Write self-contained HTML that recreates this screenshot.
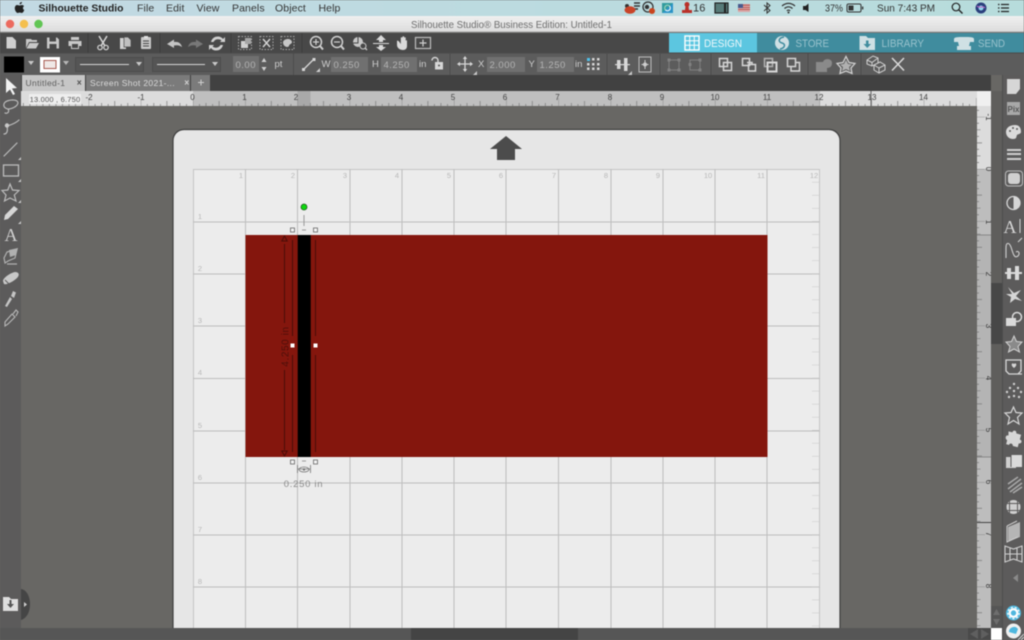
<!DOCTYPE html>
<html><head><meta charset="utf-8"><title>Silhouette Studio</title>
<style>
html,body{margin:0;padding:0;background:#686764;width:1024px;height:640px;overflow:hidden}
svg{display:block;filter:blur(.5px)}
text{font-family:"Liberation Sans",sans-serif}
</style></head><body>
<svg xmlns="http://www.w3.org/2000/svg" width="1024" height="640" viewBox="0 0 1024 640">
<defs>
<linearGradient id="menu" x1="0" x2="1" y1="0" y2="0"><stop offset="0" stop-color="#c3d9e3"/><stop offset=".5" stop-color="#bcdbe0"/><stop offset="1" stop-color="#b7dcdc"/></linearGradient>
<linearGradient id="title" x1="0" x2="0" y1="0" y2="1"><stop offset="0" stop-color="#f0f0f0"/><stop offset="1" stop-color="#dcdcdc"/></linearGradient>
<pattern id="rh" patternUnits="userSpaceOnUse" x="193" y="91" width="52.2" height="15">
<path d="M0 7V15M26.1 10V15M13 12V15M39.1 12V15M6.5 13V15M19.6 13V15M32.6 13V15M45.7 13V15" stroke="#777" stroke-width=".7" fill="none"/></pattern>
<pattern id="rv" patternUnits="userSpaceOnUse" x="977" y="169" width="14" height="52.2">
<path d="M0 0H8M0 26.1H5M0 13H3.5M0 39.1H3.5M0 6.5H2M0 19.6H2M0 32.6H2M0 45.7H2" stroke="#777" stroke-width=".7" fill="none"/></pattern>
<pattern id="mt" patternUnits="userSpaceOnUse" x="808" y="169" width="12" height="13.05">
<path d="M4 0H12" stroke="#c6c6c6" stroke-width="1"/></pattern>
</defs>

<!-- canvas -->
<rect width="1024" height="640" fill="#686764"/>

<!-- mat -->
<rect x="173" y="129.500" width="667" height="530" rx="11" fill="#e6e6e6" stroke="#3f3f3f" stroke-width="1.200"/>
<polygon points="506,136 522,149 515,149 515,160 497,160 497,149 490,149" fill="#4c4c4c"/>
<rect x="193.500" y="169.500" width="626" height="480" fill="#ececec" stroke="#c4c4c4"/>
<path d="M245.500 169V640M297.500 169V640M350 169V640M402 169V640M454 169V640M506 169V640M558.500 169V640M611 169V640M663 169V640M715 169V640M767 169V640M193 222H820M193 274H820M193 326H820M193 378.500H820M193 431H820M193 483H820M193 535H820M193 587H820" stroke="#bdbdbd" stroke-width="1" fill="none"/>
<rect x="808" y="169" width="12" height="460" fill="url(#mt)"/>
<g font-size="7.500" fill="#b8b8b8" text-anchor="middle">
<text x="241" y="178">1</text><text x="293" y="178">2</text><text x="345" y="178">3</text><text x="397" y="178">4</text><text x="449" y="178">5</text><text x="501" y="178">6</text><text x="554" y="178">7</text><text x="606" y="178">8</text><text x="658" y="178">9</text><text x="708" y="178">10</text><text x="761" y="178">11</text><text x="814" y="178">12</text>
<text x="200" y="219">1</text><text x="200" y="271">2</text><text x="200" y="323">3</text><text x="200" y="375">4</text><text x="200" y="428">5</text><text x="200" y="480">6</text><text x="200" y="532">7</text><text x="200" y="584">8</text>
</g>

<!-- shapes -->
<rect x="245.500" y="235" width="522" height="222" fill="#84160d"/>
<rect x="297.700" y="235" width="13" height="222" fill="#000"/>
<g stroke="#4a0d08" fill="none" stroke-width="1">
<path d="M292.500 240V336M292.500 355V452M315.500 240V336M315.500 355V452"/>
<path d="M284.500 244V323M284.500 370V450"/>
<path d="M284.500 236L281.800 241H287.200ZM284.500 456L281.800 451H287.200Z"/>
</g>
<text transform="translate(288.500,346.500) rotate(-90)" font-size="10" fill="#4e100a" text-anchor="middle" letter-spacing=".6">4.250 in</text>
<g stroke="#666" stroke-width=".8" fill="#f4f4f4">
<rect x="290.500" y="228" width="4" height="4"/><rect x="313.500" y="228" width="4" height="4"/>
<rect x="290.500" y="460" width="4" height="4"/><rect x="313.500" y="460" width="4" height="4"/>
</g>
<rect x="290.500" y="343.500" width="4" height="4" fill="#fff"/><rect x="313.500" y="343.500" width="4" height="4" fill="#fff"/>
<circle cx="304" cy="207" r="3" fill="#0dd60d" stroke="#245a24" stroke-width=".8"/>
<path d="M304 215V226M302 230H306M302 461H306" stroke="#999" stroke-width="1" fill="none"/>
<path d="M297.500 465V473M310.500 465V473M298 469H310" stroke="#777" stroke-width=".8" fill="none"/>
<ellipse cx="304" cy="469.500" rx="5" ry="2.500" fill="none" stroke="#777" stroke-width=".8"/><circle cx="304" cy="469.500" r="1.200" fill="#777"/>
<text x="303.500" y="487" font-size="9.500" fill="#8a8a8a" text-anchor="middle" letter-spacing=".7">0.250 in</text>

<!-- horizontal ruler -->
<rect x="21" y="75" width="970" height="16" fill="#414141"/>
<rect x="21" y="91" width="956" height="15" fill="#dcdcdc"/>
<rect x="193" y="91" width="627" height="15" fill="#bfbfbf"/>
<rect x="297.500" y="91" width="13" height="15" fill="#a9a9a9"/>
<rect x="21" y="91" width="956" height="15" fill="url(#rh)"/>
<path d="M871 91V106" stroke="#666"/>
<rect x="977" y="91" width="14" height="15" fill="#f0f0f0"/>
<g font-size="8" fill="#444" text-anchor="middle">
<text x="89" y="100">-2</text><text x="141" y="100">-1</text><text x="192.500" y="100">0</text><text x="244.500" y="100">1</text><text x="296" y="100">2</text><text x="349" y="100">3</text><text x="401" y="100">4</text><text x="453" y="100">5</text><text x="505" y="100">6</text><text x="557.500" y="100">7</text><text x="610" y="100">8</text><text x="662" y="100">9</text><text x="715" y="100">10</text><text x="767" y="100">11</text><text x="819" y="100">12</text><text x="872" y="100">13</text><text x="923.500" y="100">14</text>
</g>
<rect x="29" y="94" width="52" height="10" rx="1" fill="#f0f0f0" opacity=".9"/>
<text x="55" y="101.800" font-size="7.500" fill="#555" text-anchor="middle" letter-spacing=".2">13.000 , 6.750</text>

<!-- vertical ruler -->
<rect x="977" y="106" width="14" height="523" fill="#dcdcdc"/>
<rect x="977" y="169" width="14" height="66" fill="#bdbdbd"/>
<rect x="977" y="235" width="14" height="222" fill="#b4b4b4"/>
<rect x="977" y="457" width="14" height="172" fill="#bdbdbd"/>
<rect x="977" y="106" width="14" height="523" fill="url(#rv)"/>
<path d="M977 235H991M977 457H991" stroke="#888"/><path d="M977 522.500H991" stroke="#444"/>
<g font-size="8" fill="#333" text-anchor="middle">
<text transform="translate(986,117) rotate(90)">-1</text><text transform="translate(986,169) rotate(90)">0</text><text transform="translate(986,222) rotate(90)">1</text><text transform="translate(986,274) rotate(90)">2</text><text transform="translate(986,326) rotate(90)">3</text><text transform="translate(986,378) rotate(90)">4</text><text transform="translate(986,430) rotate(90)">5</text><text transform="translate(986,482) rotate(90)">6</text><text transform="translate(986,534) rotate(90)">7</text><text transform="translate(986,586) rotate(90)">8</text>
</g>

<!-- vertical scrollbar -->
<rect x="991" y="91" width="11" height="537" fill="#5f5e5c"/>
<rect x="991" y="283" width="11" height="61" fill="#474747"/>
<rect x="991" y="606" width="11" height="22" fill="#555"/>
<path d="M996.500 609L993 615H1000ZM996.500 625L993 619H1000Z" fill="#6e6e6e"/>
<rect x="991" y="628" width="11" height="12" fill="#fff"/>

<!-- bottom scrollbar -->
<rect x="0" y="628" width="991" height="12" fill="#565656"/>
<rect x="411" y="628" width="167" height="12" fill="#444"/>
<rect x="968" y="628" width="23" height="12" fill="#4a4a4a"/>
<path d="M970 634L978 629V639ZM989 634L981 629V639Z" fill="#5f5f5f"/>

<!-- left toolbar -->
<rect x="0" y="75" width="21" height="553" fill="#5c5b5b"/>
<path d="M6 78L17 88L12 88.500L15 94L13 95L10 89.500L6 93Z" fill="#f2f2f2"/>
<g fill="none" stroke="#bcbcbc" stroke-width="1.200" stroke-linecap="round">
<path d="M4 104C5 100 14 99 17 101C20 104 15 108 9 109C6 109 3 107 4 104ZM8 109C10 112 7 114 5 113" stroke-dasharray="1.500 .8"/>
<path d="M4 134C7 134 8 131 7 126C10 125 15 124 19 120"/>
<path d="M4 156L17 143"/>
<rect x="3.500" y="165" width="15" height="11" stroke-width="1.300"/>
<path d="M10 184L12.500 190L19 190.500L14.300 195L16 201L10 198L4.500 201L6 195L2 190.500L7.800 190Z" stroke-width="1.200"/>
</g>
<circle cx="7" cy="125.500" r="2.200" fill="#c8c8c8"/>
<path d="M4 220L5 215L14 206L18 209L8 219Z" fill="#d6d6d6"/>
<text x="11" y="241" font-size="18" fill="#d0d0d0" text-anchor="middle" style="font-family:'Liberation Serif',serif">A</text>
<path d="M5 263L4 258L7 252L17 249L15 258L8 261ZM7 264H17" fill="none" stroke="#b0b0b0" stroke-width="1.200"/>
<path d="M9 250L18 248L16 255L10 257Z" fill="#b0b0b0"/>
<path d="M3 281C3 278 10 273 15 272C19 272 20 275 17 278C13 282 6 285 4 284Z" fill="#c8c8c8"/>
<path d="M5 280L9 284" stroke="#5c5b5b"/>
<path d="M5 306L10 297L12 299L7 307ZM11 296L13 291L16 292.500L14 298Z" fill="#c4c4c4"/>
<path d="M5 326L5 322L12 314L15 317L8 324ZM13 314L16 310L18 312L16 316" fill="none" stroke="#b8b8b8" stroke-width="1.100"/>
<g fill="#c6c6c6"><path d="M21 157V160H18ZM21 179V182H18ZM21 200V203H18ZM21 221V224H18Z"/></g>

<!-- folder + drawer -->
<path d="M21 589C27 590 30 597 30 604C30 612 27 618 21 620Z" fill="#454545"/>
<path d="M24 602L27 604.500L24 607Z" fill="#cfcfcf"/>
<path d="M3 597H9L11 599H18V611H3Z" fill="#dedede"/>
<path d="M9.500 600H11.500V604H14L10.500 608L7 604H9.500Z" fill="#555"/>

<!-- right panel -->
<rect x="1002" y="75" width="22" height="565" fill="#5c5b5b"/>
<path d="M1002.500 75V640" stroke="#4d4d4d"/>
<path d="M1007 79H1020V89L1016 94H1007Z" fill="#d6d6d6"/>
<rect x="1007" y="102" width="13" height="13" fill="#a8a8a8"/><text x="1013.500" y="112" font-size="8" font-weight="bold" fill="#555" text-anchor="middle">Pix</text>
<path d="M1006 132C1006 127 1011 125 1015 125C1020 125 1021 129 1021 132C1021 134 1018 134 1017 135C1016 137 1017 139 1013 139C1009 139 1006 136 1006 132Z" fill="#dadada"/>
<g fill="#5c5b5b"><circle cx="1010" cy="131" r="1"/><circle cx="1013" cy="128" r="1"/><circle cx="1017" cy="129" r="1"/></g>
<path d="M1007 150H1021M1007 154H1021M1007 159H1021" stroke="#cfcfcf" stroke-width="2" fill="none"/>
<rect x="1005.500" y="171" width="17" height="15" rx="3" fill="none" stroke="#bdbdbd"/><rect x="1008" y="173" width="12" height="11" rx="3" fill="#d0d0d0"/>
<circle cx="1013.500" cy="203" r="6.500" fill="none" stroke="#d6d6d6" stroke-width="1.300"/><path d="M1013.500 196.500A6.500 6.500 0 0 1 1013.500 209.500Z" fill="#d6d6d6"/>
<text x="1010" y="233" font-size="18" fill="#d6d6d6" text-anchor="middle" style="font-family:'Liberation Serif',serif">A</text><path d="M1020 219V233" stroke="#d6d6d6"/>
<path d="M1006 258L1006 248C1006 242 1009 242 1011 247C1013 253 1014 259 1018 256C1020 254 1019 250 1016 252M1018 242L1022 238" fill="none" stroke="#cfcfcf" stroke-width="1.100"/>
<g fill="#dadada"><rect x="1007" y="268" width="4" height="11"/><rect x="1015" y="266" width="4" height="14"/><rect x="1005" y="272" width="17" height="2"/></g>
<path d="M1008 287L1014 293L1021 290L1016 296L1022 301L1015 299L1010 303L1011 297L1006 294L1012 294Z" fill="#d6d6d6"/>
<rect x="1006" y="318" width="10" height="8" fill="#dadada"/><circle cx="1017" cy="317" r="4.500" fill="none" stroke="#dadada" stroke-width="1.500"/>
<path d="M1014 336L1016.500 341.500L1022 342L1018 346.500L1019.500 352L1014 349L1008.500 352L1010 346.500L1006 342L1011.500 341.500Z" fill="#8a8a8a" stroke="#d0d0d0"/>
<path d="M1006 360H1021V371L1018 374H1009L1006 371ZM1010 374H1022" fill="none" stroke="#d6d6d6" stroke-width="1.300"/>
<path d="M1014 364C1012 362 1010 365 1014 368C1018 365 1016 362 1014 364Z" fill="#d6d6d6"/>
<g fill="#cfcfcf"><circle cx="1014" cy="384" r="1.200"/><circle cx="1010" cy="388" r="1.200"/><circle cx="1018" cy="388" r="1.200"/><circle cx="1007" cy="392" r="1.200"/><circle cx="1014" cy="391" r="1.200"/><circle cx="1021" cy="392" r="1.200"/><circle cx="1009" cy="397" r="1.200"/><circle cx="1019" cy="397" r="1.200"/><circle cx="1014" cy="396" r="1.200"/></g>
<path d="M1013.500 407L1016 412.500L1022 413L1017.500 417.500L1019 424L1013.500 420.500L1008 424L1009.500 417.500L1005 413L1011 412.500Z" fill="none" stroke="#d6d6d6" stroke-width="1.200"/>
<path d="M1007 433H1011C1011 430 1015 430 1015 433H1020V438C1023 438 1023 442 1020 442V446H1015C1014 443 1011 444 1011 446H1008V442C1005 441 1005 437 1008 437Z" transform="rotate(15 1014 438)" fill="#d6d6d6"/>
<rect x="1006" y="457" width="10" height="11" fill="#cfcfcf"/><rect x="1011" y="455" width="11" height="12" fill="#dadada"/><path d="M1011 455V467" stroke="#5c5b5b"/>
<path d="M1008 484L1018 477M1008 489L1021 479M1010 492L1022 483M1013 493L1022 487" stroke="#a8a8a8" stroke-width="1.600"/>
<circle cx="1013.500" cy="507" r="7" fill="#cfcfcf"/><path d="M1009.500 500.500V513.500M1017.500 500.500V513.500M1007 503.500H1020M1007 510.500H1020" stroke="#5c5b5b"/>
<path d="M1008 527L1020 522V537L1008 541Z" fill="#b5b5b5"/><path d="M1007 526L1017 521M1007 526V542L1018 537" fill="none" stroke="#cfcfcf"/>
<path d="M1005 546L1013.500 549L1022 546V562L1013.500 559L1005 562ZM1010 548V560M1017 548V560M1005 554H1022" fill="none" stroke="#cfcfcf" stroke-width="1.100"/>
<path d="M1013 578L1018 574V582Z" fill="#8a8a8a"/>
<circle cx="1013.500" cy="613" r="7.500" fill="#4fb7de"/><circle cx="1013.500" cy="613" r="3.800" fill="none" stroke="#fff" stroke-width="2.200"/><circle cx="1013.500" cy="613" r="5.700" fill="none" stroke="#fff" stroke-width="1.200" stroke-dasharray="2 2"/>
<circle cx="1013.500" cy="631" r="7.500" fill="#f0f0f0"/><path d="M1009 632A5 5 0 0 1 1018 629L1016 634Z" fill="#4fb7de"/>
<path d="M1018 640L1024 634M1021 640L1024 637" stroke="#cfcfcf"/>

<!-- menu bar -->
<rect width="1024" height="16" fill="url(#menu)"/>
<path d="M19.500 3.500C20 2.500 21 2 22 2C22 3.200 21 4.300 19.800 4.300ZM17 5C18 5 18.700 5.500 19.500 5.500C20.300 5.500 21 5 22 5C23 5 23.700 5.500 24 6.200C22.500 7 22.700 9.300 24.300 10C23.700 11.500 22.700 13 21.700 13C21 13 20.500 12.500 19.700 12.500C18.800 12.500 18.400 13 17.600 13C16.400 13 14.800 10.500 14.800 8.300C14.800 6.200 16 5 17 5Z" fill="#222"/>
<g font-size="10.500" fill="#333" letter-spacing=".1">
<text x="38.500" y="11.500" font-weight="bold" fill="#222" textLength="85" lengthAdjust="spacingAndGlyphs" letter-spacing="0">Silhouette Studio</text>
<text x="137" y="11.500">File</text><text x="166" y="11.500">Edit</text><text x="196.500" y="11.500">View</text><text x="232" y="11.500">Panels</text><text x="275" y="11.500">Object</text><text x="318.500" y="11.500">Help</text>
<text x="693" y="11.500" font-size="11">16</text>
<text x="825" y="11.500" font-size="10" textLength="18" lengthAdjust="spacingAndGlyphs" letter-spacing="0">37%</text>
<text x="877" y="11.500" textLength="58" lengthAdjust="spacingAndGlyphs" letter-spacing="0">Sun 7:43 PM</text>
</g>
<!-- status icons -->
<path d="M634 3L640 3M634 6H640M634 9H638" stroke="#333" stroke-width="1.500"/><circle cx="627" cy="6" r="2" fill="#333"/>
<ellipse cx="630" cy="10" rx="5.500" ry="3.800" fill="#c8452a"/>
<circle cx="648" cy="7" r="5" fill="none" stroke="#333" stroke-width="1.300"/><circle cx="647" cy="7" r="2.200" fill="#333"/><circle cx="652" cy="11" r="3" fill="#c8451f"/>
<rect x="662" y="3" width="11" height="10" fill="#2b94c8"/><circle cx="667.500" cy="8" r="2.800" fill="none" stroke="#e8f4f8" stroke-width="1.200"/><path d="M662 3H673L662 13Z" fill="#3aa36a" opacity=".45"/>
<circle cx="687" cy="4.500" r="2.500" fill="#b9322a"/><path d="M685.500 6H688.500L689 10H692V13H682V10H685Z" fill="#b9322a"/>
<rect x="715" y="3" width="13" height="10" fill="#577a78" stroke="#222" stroke-width="1.200"/><path d="M725 3.500V12.500" stroke="#222" stroke-width="2"/>
<rect x="738" y="4" width="12" height="8" fill="#d9a8a8"/><rect x="738" y="4" width="5" height="4" fill="#4a5a8c"/><path d="M743 5.200H750M743 7.500H750M738 9.500H750" stroke="#b5443c" stroke-width=".8"/>
<path d="M764 5L770 10.500L767 13V3L770 5.500L764 11" fill="none" stroke="#333" stroke-width="1"/>
<g fill="none" stroke="#333" stroke-width="1.200"><path d="M782 6C786 2.500 791 2.500 795 6M784.500 8.500C787 6.300 790 6.300 792.500 8.500M786.800 10.800C788 9.800 789 9.800 790.200 10.800"/></g><circle cx="788.500" cy="12.500" r="1" fill="#333"/>
<path d="M803 6H805.500L808.500 3.500V12L805.500 10H803Z" fill="#222"/>
<rect x="847" y="4" width="14" height="8" rx="1.500" fill="none" stroke="#333"/><rect x="848.500" y="5.500" width="5" height="5" fill="#333"/><rect x="862" y="6.500" width="1.300" height="3" fill="#333"/>
<circle cx="956" cy="7" r="3.800" fill="none" stroke="#222" stroke-width="1.200"/><path d="M959 10L962.500 13.500" stroke="#222" stroke-width="1.400"/>
<circle cx="981" cy="8" r="5.500" fill="#2a3f7c"/><circle cx="981" cy="8" r="2.500" fill="#8fd5ec"/><path d="M977 6C980 9 983 5 985 8" stroke="#c96bc8" fill="none"/>
<path d="M998 4.500H999.500M1001 4.500H1009M998 8H999.500M1001 8H1009M998 11.500H999.500M1001 11.500H1009" stroke="#222" stroke-width="1.200"/>

<!-- title bar -->
<rect y="16" width="1024" height="16" fill="url(#title)"/>
<path d="M0 32H1024" stroke="#9a9a9a"/>
<circle cx="10" cy="24" r="4.200" fill="#ec6a5e"/><circle cx="24" cy="24" r="4.200" fill="#f4bf4f"/><circle cx="38.500" cy="24" r="4.200" fill="#61c554"/>
<text x="411" y="28" font-size="10" fill="#6e6e6e" textLength="201" lengthAdjust="spacingAndGlyphs">Silhouette Studio® Business Edition: Untitled-1</text>

<!-- toolbar row 1 -->
<rect y="33" width="1024" height="20" fill="#484848"/>
<rect x="669" y="33" width="355" height="20" fill="#408c9e"/>
<rect x="669" y="33" width="88" height="20" fill="#5cc6e0"/>
<rect x="685" y="36" width="14" height="14" fill="none" stroke="#fff" stroke-width="1.400"/><path d="M689.700 36V50M694.300 36V50M685 40.700H699M685 45.300H699" stroke="#fff" stroke-width="1"/>
<circle cx="782" cy="43" r="7" fill="#cfe0e4"/><path d="M784 37C778 38 778 42 782 43C786 44 785 48 780 49" fill="none" stroke="#408c9e" stroke-width="1.500"/>
<path d="M859.500 36H866L868 38H875V50H859.500Z" fill="#cfe0e4"/><path d="M866 40.500H868.500V44H871L867.300 48L863.500 44H866Z" fill="#408c9e"/>
<path d="M954 39C954 37 958 37 964 37C970 37 974 37 974 39V42H970L969 46H971V50H957V46H959L958 42H954Z" fill="#cfe0e4"/>
<g font-size="11"><text x="704" y="47" fill="#eef8fb" textLength="38" lengthAdjust="spacingAndGlyphs">DESIGN</text><text x="795.500" y="47" fill="#98c2cc" textLength="33.500" lengthAdjust="spacingAndGlyphs">STORE</text><text x="881.500" y="47" fill="#98c2cc" textLength="42.500" lengthAdjust="spacingAndGlyphs">LIBRARY</text><text x="978" y="47" fill="#98c2cc" textLength="27" lengthAdjust="spacingAndGlyphs">SEND</text></g>
<path d="M6.500 37H12.500L16 40.500V48.500H6.500Z" fill="#d0d0d0"/>
<path d="M26 39H31L32 40H37V42H29L26 48ZM29.500 43H39L36 48.500H26.500Z" fill="#c8c8c8"/>
<path d="M47 37.500H57L59 39.500V48.500H47ZM49.500 37.500V41.500H56V37.500M49.500 44H56.500V48.500H49.500Z" fill="#c8c8c8" fill-rule="evenodd"/>
<path d="M71 37H79V40H71ZM68.500 41H81.500V46H79V49H71V46H68.500Z" fill="#c8c8c8"/><rect x="72" y="44" width="6" height="4" fill="#484848"/>
<path d="M88 33V53M160 33V53M231 33V53M302 33V53" stroke="#3d3d3d"/>
<path d="M99 36L105 46M107 36L101 46" stroke="#d6d6d6" stroke-width="1.500" fill="none"/><circle cx="100" cy="47.500" r="2.200" fill="none" stroke="#d6d6d6" stroke-width="1.200"/><circle cx="106" cy="47.500" r="2.200" fill="none" stroke="#d6d6d6" stroke-width="1.200"/>
<path d="M120 38H126L130 42V47H126V49H120Z" fill="#d0d0d0"/><path d="M124 37H128L131 40V47H124Z" fill="#c0c0c0" stroke="#484848" stroke-width=".7"/>
<rect x="141" y="37" width="10" height="12" rx="1" fill="#c8c8c8"/><rect x="144" y="36" width="4" height="2.500" fill="#e0e0e0"/><path d="M143 41H149M143 43.500H149M143 46H149" stroke="#484848"/>
<path d="M167 44L174 39.500V42C178 41.500 181 43 182 47C179 45 177 45 174 45.500V48Z" fill="#c4c4c4"/>
<path d="M203 44L196 39.500V42C192 41.500 189 43 188 47C191 45 193 45 196 45.500V48Z" fill="#787878"/>
<path d="M211 42C212 38 215 36.500 218 36.500C220 36.500 222 37.500 223 39L225 37V42H220L221.500 40.500C219 38.500 215 39 213.500 42ZM223 45C222 49 219 50.500 216 50.500C214 50.500 212 49.500 211 48L209 50V45H214L212.500 46.500C215 48.500 219 48 220.500 45Z" fill="#d0d0d0"/>
<g fill="none" stroke="#a8a8a8" stroke-dasharray="1.500 1.500"><rect x="238.500" y="36.500" width="13" height="13"/><rect x="260" y="36.500" width="13" height="13"/><rect x="281" y="36.500" width="13" height="13"/></g>
<rect x="241" y="41" width="7" height="7" fill="#d0d0d0"/><rect x="245" y="38" width="6" height="6" fill="#a5a5a5"/>
<path d="M263 39L270 47M270 39L263 47" stroke="#d6d6d6" stroke-width="1.400"/>
<path d="M283 42C284 38.500 291 37.500 292 42C292 44 289 44 289 46C288 48 283 47 283 42Z" fill="#c8c8c8"/>
<circle cx="316" cy="42" r="5.500" fill="none" stroke="#d0d0d0" stroke-width="1.500"/><path d="M320 46L323 49.500" stroke="#d0d0d0" stroke-width="2"/><path d="M313 42H319M316 39V45" stroke="#d0d0d0" stroke-width="1.200"/>
<circle cx="337" cy="42" r="5.500" fill="none" stroke="#d0d0d0" stroke-width="1.500"/><path d="M341 46L344 49.500" stroke="#d0d0d0" stroke-width="2"/><path d="M334 42H340" stroke="#d0d0d0" stroke-width="1.200"/>
<circle cx="358" cy="42" r="5" fill="#c8c8c8"/><path d="M358 37V43H353" stroke="#484848" fill="none"/><circle cx="363" cy="46" r="3" fill="#484848" stroke="#c8c8c8"/><path d="M365 48L367 50" stroke="#c8c8c8" stroke-width="1.300"/>
<path d="M381 35L386 40H383V42H379V40H376ZM373 43H389L389 44H373ZM379 45H383V47H386L381 51L376 47H379Z" fill="#dadada"/>
<path d="M397 41V45C397 48 400 50 403 50C406 50 407 48 407 46V41C407 40 405.800 40 405.700 41V38C405.700 37 404.300 37 404.200 38V37C404.200 36 402.500 36 402.500 37V38C402.500 37 400.800 37 400.800 38V44L399 41.500C398 40.500 397 40.500 397 41Z" fill="#dadada"/>
<rect x="415.500" y="37.500" width="15" height="11" fill="none" stroke="#bdbdbd" stroke-width="1.200"/><path d="M423 39.500V46.500M419.500 43H426.500" stroke="#d0d0d0" stroke-width="1.200"/>

<!-- toolbar row 2 -->
<rect y="53" width="1024" height="22" fill="#5c5c5c"/>
<path d="M0 53H1024" stroke="#4a4a4a"/>
<rect x="4" y="56.500" width="20" height="16" fill="#000"/>
<path d="M28 61H34L31 65Z" fill="#c8c8c8"/>
<rect x="40" y="57" width="20" height="15.500" fill="#fff"/><rect x="44" y="60.500" width="12" height="8" fill="#f0e8e6" stroke="#a85a50"/>
<path d="M63 61H69L66 65Z" fill="#b8b8b8"/>
<rect x="75.500" y="57.500" width="68" height="14" fill="#555" stroke="#4c4c4c"/><path d="M80 64.500H129" stroke="#d6d6d6"/><path d="M136 62H142L139 66Z" fill="#c8c8c8"/>
<rect x="152.500" y="57.500" width="68" height="14" fill="#555" stroke="#4c4c4c"/><path d="M157 64.500H205" stroke="#d6d6d6"/><path d="M212 62H218L215 66Z" fill="#c8c8c8"/>
<rect x="233" y="56" width="26" height="16" fill="#707070"/>
<path d="M264 58L261.500 62H266.500ZM264 71L261.500 67H266.500Z" fill="#d0d0d0"/>
<rect x="331" y="57" width="37" height="15" fill="#707070"/><rect x="381" y="57" width="36" height="15" fill="#707070"/><rect x="487" y="57" width="38" height="15" fill="#707070"/><rect x="537" y="57" width="37" height="15" fill="#707070"/>
<g font-size="9.500" fill="#b4b4b4" letter-spacing=".5">
<text x="235.500" y="68">0.00</text><text x="333.500" y="68">0.250</text><text x="383.500" y="68">4.250</text><text x="489.500" y="68">2.000</text><text x="539.500" y="68">1.250</text>
</g>
<g font-size="9.500" fill="#cfcfcf">
<text x="274.500" y="67">pt</text><text x="321.500" y="67">W</text><text x="372" y="67">H</text><text x="419" y="67">in</text><text x="478" y="67">X</text><text x="528.500" y="67">Y</text><text x="575" y="67">in</text>
</g>
<path d="M293.500 53V75M450 53V75M607 53V75M660 53V75M711 53V75M808 53V75M861 53V75" stroke="#4c4c4c"/>
<path d="M303 70L314 59" stroke="#d6d6d6" stroke-width="1.300"/><path d="M302 68H305V71H302ZM312.500 58H315.500V61H312.500Z" fill="#d6d6d6"/>
<path d="M320 72H316L320 68Z" fill="#d0d0d0"/>
<path d="M432 60.500C432 56.500 438 56.500 438 60.500V62" fill="none" stroke="#d6d6d6" stroke-width="1.400"/><rect x="435" y="62" width="8" height="7.500" fill="#d6d6d6"/><circle cx="439" cy="65.500" r="1" fill="#555"/>
<path d="M465 57.500V70.500M458.500 64H471.500" stroke="#d6d6d6" stroke-width="1.300"/><path d="M465 56L462.800 59H467.200ZM465 72L462.800 69H467.200ZM457 64L460 61.800V66.200ZM473 64L470 61.800V66.200Z" fill="#d6d6d6"/>
<path d="M477 75H473L477 71Z" fill="#c8c8c8"/>
<g fill="#d6d6d6"><rect x="592" y="58" width="2.500" height="2.500"/><rect x="597" y="58" width="2.500" height="2.500"/><rect x="587" y="63" width="2.500" height="2.500"/><rect x="592" y="63" width="2.500" height="2.500"/><rect x="597" y="63" width="2.500" height="2.500"/><rect x="587" y="67.500" width="2.500" height="2.500"/><rect x="592" y="67.500" width="2.500" height="2.500"/><rect x="597" y="67.500" width="2.500" height="2.500"/></g><rect x="587" y="58" width="3" height="3" fill="#4fc0ea"/>
<g fill="#d8d8d8"><rect x="617" y="60" width="3.500" height="9"/><rect x="624" y="58" width="3.500" height="13"/><rect x="615" y="64" width="15" height="1.200"/></g><path d="M632 75H628L632 71Z" fill="#c8c8c8"/>
<rect x="639" y="57" width="12" height="15" fill="none" stroke="#bdbdbd"/><path d="M645 60V69M641.500 64.500H648.500" stroke="#cfcfcf"/><circle cx="645" cy="64.500" r="2" fill="#cfcfcf"/>
<g fill="none" stroke="#808080"><rect x="669" y="60" width="10" height="10"/><rect x="690" y="60" width="10" height="10"/></g>
<g fill="#808080"><rect x="667.500" y="58.500" width="3" height="3"/><rect x="677.500" y="58.500" width="3" height="3"/><rect x="667.500" y="68.500" width="3" height="3"/><rect x="677.500" y="68.500" width="3" height="3"/><rect x="688.500" y="63" width="3" height="3"/><rect x="698.500" y="58.500" width="3" height="3"/><rect x="698.500" y="68.500" width="3" height="3"/></g>
<g fill="none" stroke="#d6d6d6" stroke-width="1.500">
<rect x="719.500" y="58.500" width="8" height="8"/><rect x="723.500" y="62.500" width="8" height="8"/>
<rect x="742.500" y="58.500" width="7" height="7"/><rect x="748.500" y="64.500" width="7" height="6.500"/><path d="M747 62.500H752V65"/>
<rect x="764.500" y="58.500" width="8" height="8" stroke-opacity=".7"/><rect x="767.500" y="62.500" width="9" height="9" stroke-width="2"/>
<rect x="787.500" y="58.500" width="8" height="8"/><path d="M795.500 62.500H799.500V71H791V66.500"/>
</g>
<path d="M816 62H823C824 58 832 58 832 63C832 67 829 68 827 68V72H816Z" fill="#8a8a8a"/>
<path d="M846 56.500L849 62.500L855 63.500L851 68L852 73.500L846 71L840 73.500L841 68L837 63.500L843 62.500Z" fill="none" stroke="#cfcfcf" stroke-width="1.300"/><path d="M846 60L848 64L852 64.500L849 67L850 71L846 69L842 71L843 67L840 64.500L844 64Z" fill="#b0b0b0"/>
<path d="M867 60L873 56L878 58V63L872 66L867 64ZM867 60L872 62.500L878 58M872 62.500V66M874 65L880 62L885 65V70L879 73L874 70ZM874 65L879 68L885 65M879 68V73" fill="none" stroke="#cfcfcf" stroke-width="1"/>
<path d="M892 58L904 70.500M904 58L892 70.500" stroke="#dadada" stroke-width="1.500"/>

<!-- tabs -->
<rect x="22" y="75" width="63" height="16" fill="#c6c6c6"/>
<rect x="86" y="75" width="104" height="16" fill="#7b7b7b"/>
<rect x="191" y="75" width="19" height="16" fill="#7b7b7b"/>
<text x="25.500" y="86" font-size="8.500" fill="#5e5e5e" letter-spacing=".35">Untitled-1</text>
<text x="90" y="86" font-size="8.500" fill="#dadada" letter-spacing=".35">Screen Shot 2021-...</text>
<path d="M77.500 80.500L81 84.500M81 80.500L77.500 84.500" stroke="#555" stroke-width="1"/>
<path d="M185 80.500L188.500 84.500M188.500 80.500L185 84.500" stroke="#cfcfcf" stroke-width="1"/>
<path d="M198 82.500H204M201 79.500V85.500" stroke="#cfcfcf"/>
</svg>
</body></html>
